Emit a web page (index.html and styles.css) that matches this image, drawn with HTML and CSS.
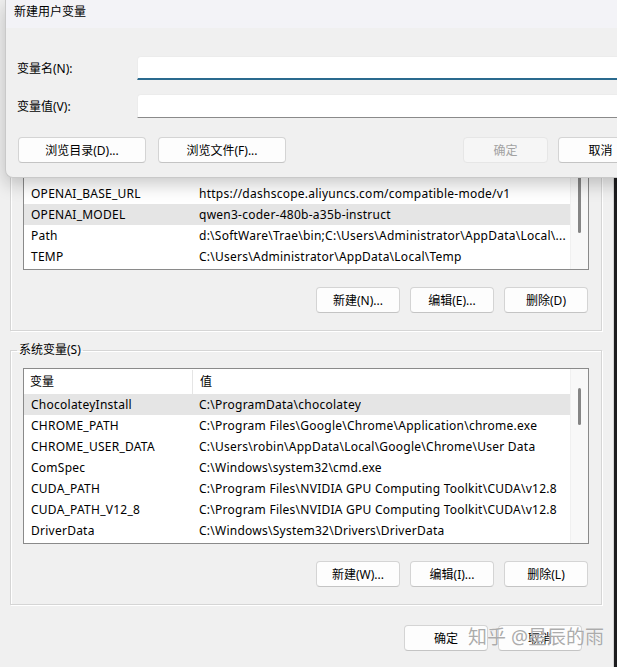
FILE: index.html
```html
<!DOCTYPE html>
<html lang="zh-CN">
<head>
  <meta charset="UTF-8" />
  <meta name="viewport" content="width=device-width, initial-scale=1.0"/>
  <title>环境变量</title>
  <link rel="stylesheet" href="styles.css">
</head>
<body>

  <div class="window">

    <!-- top of this group sits under the dialog -->
    <fieldset class="group group-user">
      <div class="list">
        <div class="list-body">
          <div class="list-head"><span class="col-name"></span><span class="col-value"></span></div>
          <div class="row"></div>
          <div class="row"></div>
          <div class="row"></div>
          <div class="row"><span class="col-name">OPENAI_BASE_URL</span><span class="col-value">https://dashscope.aliyuncs.com/compatible-mode/v1</span></div>
          <div class="row selected"><span class="col-name">OPENAI_MODEL</span><span class="col-value">qwen3-coder-480b-a35b-instruct</span></div>
          <div class="row"><span class="col-name">Path</span><span class="col-value">d:\SoftWare\Trae\bin;C:\Users\Administrator\AppData\Local\...</span></div>
          <div class="row"><span class="col-name">TEMP</span><span class="col-value">C:\Users\Administrator\AppData\Local\Temp</span></div>
        </div>
        <div class="scrollbar"><div class="thumb thumb-user"></div></div>
      </div>
      <div class="actions">
        <button class="btn">新建(N)...</button>
        <button class="btn">编辑(E)...</button>
        <button class="btn">删除(D)</button>
      </div>
    </fieldset>

    <fieldset class="group group-system">
      <legend>系统变量(S)</legend>
      <div class="list">
        <div class="list-body">
          <div class="list-head"><span class="col-name">变量</span><span class="col-value">值</span></div>
          <div class="row selected"><span class="col-name">ChocolateyInstall</span><span class="col-value">C:\ProgramData\chocolatey</span></div>
          <div class="row"><span class="col-name">CHROME_PATH</span><span class="col-value">C:\Program Files\Google\Chrome\Application\chrome.exe</span></div>
          <div class="row"><span class="col-name">CHROME_USER_DATA</span><span class="col-value">C:\Users\robin\AppData\Local\Google\Chrome\User Data</span></div>
          <div class="row"><span class="col-name">ComSpec</span><span class="col-value">C:\Windows\system32\cmd.exe</span></div>
          <div class="row"><span class="col-name">CUDA_PATH</span><span class="col-value">C:\Program Files\NVIDIA GPU Computing Toolkit\CUDA\v12.8</span></div>
          <div class="row"><span class="col-name">CUDA_PATH_V12_8</span><span class="col-value">C:\Program Files\NVIDIA GPU Computing Toolkit\CUDA\v12.8</span></div>
          <div class="row"><span class="col-name">DriverData</span><span class="col-value">C:\Windows\System32\Drivers\DriverData</span></div>
        </div>
        <div class="scrollbar"><div class="thumb thumb-system"></div></div>
      </div>
      <div class="actions">
        <button class="btn">新建(W)...</button>
        <button class="btn">编辑(I)...</button>
        <button class="btn">删除(L)</button>
      </div>
    </fieldset>

    <div class="footer">
      <button class="btn">确定</button>
      <button class="btn">取消</button>
    </div>

    <div class="watermark">知乎 @星辰的雨</div>

    <div class="dialog">
      <div class="dialog-title">新建用户变量</div>
      <div class="dialog-body">
        <div class="form">
          <label for="varName">变量名(N):</label>
          <input type="text" id="varName" class="field focused">
          <label for="varValue">变量值(V):</label>
          <input type="text" id="varValue" class="field">
        </div>
        <div class="dialog-actions">
          <div class="left-actions">
            <button class="btn btn-wide">浏览目录(D)...</button>
            <button class="btn btn-wide">浏览文件(F)...</button>
          </div>
          <div class="right-actions">
            <button class="btn btn-dlg" disabled>确定</button>
            <button class="btn btn-dlg">取消</button>
          </div>
        </div>
      </div>
    </div>

  </div>

</body>
</html>
```

FILE: styles.css
```css
body {
  margin: 0;
  width: 617px;
  height: 667px;
  overflow: hidden;
  background: #1d1d1f;
  font-family: 'Noto Sans', 'Noto Sans CJK SC', sans-serif;
  font-size: 12px;
  color: #000;
}

.window {
  position: relative;
  width: 614px;
  height: 667px;
  box-sizing: border-box;
  padding-top: 68px;
  background: #f0f0f0;
  border-right: 1px solid #d4d4d4;
}

.group {
  margin: 0 11px 0 10px;
  padding: 10px 12px 17px;
  border: 1px solid #d5d5d5;
  box-shadow: 1px 1px 0 #fff, inset 1px 1px 0 #fff;
  min-width: 0;
}

/* no legend here, so the border is not pushed down */
.group-user {
  margin-top: 8px;
  padding-top: 17px;
}

.group-system {
  margin-top: 11px;
}

legend {
  line-height: 16px;
  padding: 0 2px;
  margin-left: -6px;
}

.list {
  display: flex;
  height: 176px;
  box-sizing: border-box;
  border: 1px solid #8a8a8a;
  background: #fff;
  overflow: hidden;
}

.list-body {
  flex: 1;
  min-width: 0;
  padding-top: 1px;
}

.list-head,
.row {
  display: flex;
  white-space: nowrap;
}

.list-head {
  height: 24px;
  line-height: 24px;
}

.list-head .col-name {
  padding-left: 6px;
  width: 162px;
  border-right: 1px solid #e5e5e5;
}

.row {
  height: 21px;
  line-height: 21px;
  letter-spacing: 0.25px;
}

.row.selected {
  background: #e5e5e5;
}

.col-name {
  width: 161px;
  padding-left: 7px;
  flex: none;
}

.col-value {
  padding-left: 7px;
  overflow: hidden;
}

.scrollbar {
  width: 17px;
  flex: none;
  background: #f8f8f8;
  border-left: 1px solid #f0f0f0;
}

.thumb {
  width: 3px;
  margin: 0 auto;
  background: #858585;
  border-radius: 2px;
}

.thumb-user {
  margin-top: 25px;
  height: 113px;
}

.thumb-system {
  margin-top: 19px;
  height: 37px;
}

.actions {
  display: flex;
  justify-content: flex-end;
  gap: 10px;
  margin-top: 17px;
  padding-right: 1px;
}

.btn {
  width: 84px;
  height: 26px;
  padding: 0;
  font-family: inherit;
  font-size: 12px;
  color: #000;
  background: #fdfdfd;
  border: 1px solid #d4d4d4;
  border-bottom-color: #c4c4c4;
  border-radius: 4px;
}

.btn:disabled {
  color: #a2a2a2;
  background: #f6f6f6;
  border-color: #e6e6e6;
}

.footer {
  display: flex;
  justify-content: flex-end;
  gap: 10px;
  margin-top: 20px;
  padding-right: 31px;
}

.watermark {
  position: absolute;
  left: 468px;
  top: 625px;
  font-size: 19px;
  line-height: 24px;
  color: rgba(150, 150, 150, 0.8);
  text-shadow: 0 0 1px #fff;
  pointer-events: none;
}

.dialog {
  position: absolute;
  left: 5px;
  top: 0;
  width: 651px;
  height: 178px;
  box-sizing: border-box;
  background: #f0f0f0;
  border-left: 1px solid #c9c9c9;
  border-bottom: 1px solid #c9c9c9;
  border-radius: 0 0 0 8px;
  box-shadow: 0 6px 18px rgba(0, 0, 0, 0.22);
  overflow: hidden;
}

.dialog-title {
  height: 28px;
  line-height: 24px;
  padding-left: 8px;
  background: #f3f3f7;
}

.dialog-body {
  padding: 28px 13px 0 11px;
}

.form {
  display: grid;
  grid-template-columns: 120px 1fr;
  row-gap: 14px;
  align-items: center;
}

.field {
  height: 24px;
  box-sizing: border-box;
  margin: 0;
  padding: 0 8px;
  font-family: inherit;
  font-size: 12px;
  background: #fff;
  border: 1px solid #ececec;
  border-bottom: 1px solid #8a8a8a;
  border-radius: 4px 4px 0 0;
  outline: none;
}

.field.focused {
  border-bottom: 2px solid #2a6a8e;
}

.dialog-actions {
  display: flex;
  justify-content: space-between;
  margin-top: 19px;
  padding-left: 1px;
}

.left-actions {
  display: flex;
  gap: 12px;
}

.right-actions {
  display: flex;
  gap: 10px;
}

.btn-wide {
  width: 128px;
}

.btn-dlg {
  width: 85px;
}
```
